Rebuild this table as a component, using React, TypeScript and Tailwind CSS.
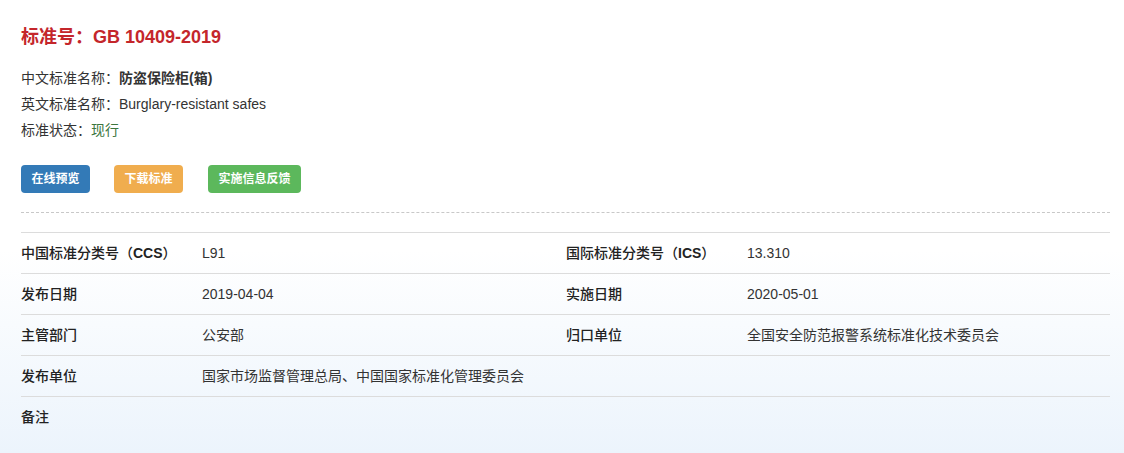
import React from "react";

const font = { fontFamily: '"Liberation Sans", "Noto Sans CJK SC", Arial, sans-serif' };

type Row = [React.ReactNode, string, React.ReactNode?, string?];
const rows: Row[] = [
  [
    <>中国标准分类号（<span className="font-bold">CCS</span>）</>,
    "L91",
    <>国际标准分类号（<span className="font-bold">ICS</span>）</>,
    "13.310",
  ],
  ["发布日期", "2019-04-04", "实施日期", "2020-05-01"],
  ["主管部门", "公安部", "归口单位", "全国安全防范报警系统标准化技术委员会"],
  ["发布单位", "国家市场监督管理总局、中国国家标准化管理委员会"],
  ["备注", ""],
];

export default function App() {
  return (
    <div
      style={font}
      className="w-[1124px] h-[453px] overflow-hidden bg-[linear-gradient(to_bottom,#ffffff_0px,#ffffff_250px,#ecf4fc_453px)] text-[#333]"
    >
      <div className="pl-[21px] pr-[14px] pt-[24px]">
        <h1 className="text-[18px] leading-[26px] font-bold text-[#c4262b]">
          标准号：GB 10409-2019
        </h1>
        <div className="mt-[15px] text-[14px] leading-[26px]">
          <div>
            中文标准名称：<span className="font-bold">防盗保险柜(箱)</span>
          </div>
          <div>英文标准名称：Burglary-resistant safes</div>
          <div>
            标准状态：<span className="text-[#3c763d]">现行</span>
          </div>
        </div>
        <div className="mt-[22px] flex items-center">
          <button className="h-[28px] px-[10.5px] rounded-[4px] bg-[#337ab7] text-white text-[12px] font-bold">
            在线预览
          </button>
          <button className="ml-[24px] h-[28px] px-[10.5px] rounded-[4px] bg-[#f0ad4e] text-white text-[12px] font-bold">
            下载标准
          </button>
          <button className="ml-[25px] h-[28px] px-[10.5px] rounded-[4px] bg-[#5cb85c] text-white text-[12px] font-bold">
            实施信息反馈
          </button>
        </div>
        <div className="mt-[19px] border-t border-dashed border-[#c8c8c8]" />
        <div className="mt-[19px] text-[14px]">
          {rows.map((r, i) => (
            <div
              key={i}
              className="grid grid-cols-[181px_364px_181px_1fr] h-[41px] items-center border-t border-[#dcdcdc]"
            >
              <div className="font-medium text-[#222]">{r[0]}</div>
              <div>{r[1]}</div>
              <div className="font-medium text-[#222]">{r[2] ?? ""}</div>
              <div>{r[3] ?? ""}</div>
            </div>
          ))}
        </div>
      </div>
    </div>
  );
}
